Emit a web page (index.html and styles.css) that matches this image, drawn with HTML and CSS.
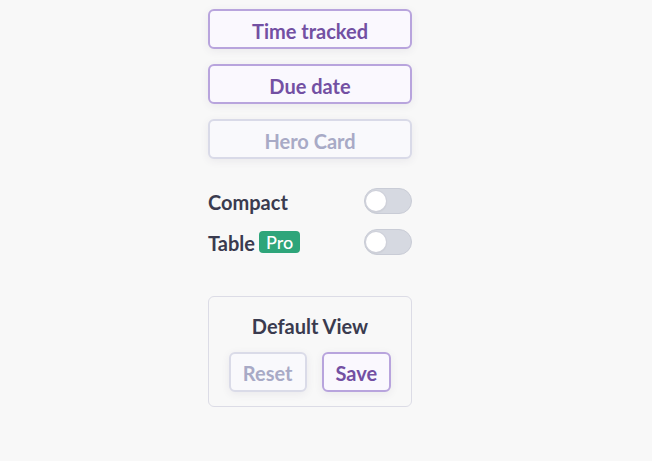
FILE: index.html
```html
<!DOCTYPE html>
<html lang="en">
<head>
<meta charset="utf-8">
<title>View settings</title>
<link rel="stylesheet" href="styles.css">
</head>
<body>
<div class="panel">
  <div class="options">
    <button class="opt">Time tracked</button>
    <button class="opt">Due date</button>
    <button class="opt opt-disabled">Hero Card</button>
  </div>
  <div class="toggles">
    <div class="row">
      <span class="label">Compact</span>
      <span class="switch"><span class="knob"></span></span>
    </div>
    <div class="row">
      <span class="label">Table <span class="badge">Pro</span></span>
      <span class="switch"><span class="knob"></span></span>
    </div>
  </div>
  <div class="card">
    <div class="card-title">Default View</div>
    <div class="actions">
      <button class="btn btn-muted">Reset</button>
      <button class="btn btn-primary">Save</button>
    </div>
  </div>
</div>
</body>
</html>
```
FILE: styles.css
```css
html, body {
  margin: 0;
  padding: 0;
  background: #f8f8f8;
}
body {
  font-family: Lato, "Noto Sans", sans-serif;
  color: #3a3b4f;
}
.panel {
  width: 204px;
  margin-left: 208px;
  padding-top: 9px;
}
.options {
  display: flex;
  flex-direction: column;
  gap: 15px;
}
.opt {
  height: 40px;
  box-sizing: border-box;
  border: 2px solid #b8a4dd;
  border-radius: 6px;
  background: #faf8fe;
  color: #7350a3;
  font-family: Lato, sans-serif;
  font-weight: 700;
  font-size: 20px;
  padding: 3px 0 0;
  box-shadow: 0 2px 8px rgba(60, 50, 90, 0.08);
}
.opt-disabled {
  border-color: #d9dae8;
  color: #a8aac6;
  background: #f9f9fc;
}
.toggles {
  margin-top: 29px;
  display: flex;
  flex-direction: column;
  gap: 15px;
}
.row {
  height: 26px;
  display: flex;
  align-items: center;
  justify-content: space-between;
}
.label {
  font-size: 20px;
  font-weight: 700;
  color: #3a3b4f;
  display: flex;
  align-items: center;
  gap: 4px;
  padding-top: 2px;
}
.badge {
  display: inline-block;
  background: #2ea57a;
  color: #ffffff;
  font-size: 18px;
  font-weight: 500;
  line-height: 22px;
  padding: 0 7px;
  border-radius: 4px;
  margin-top: -2px;
}
.switch {
  width: 48px;
  height: 26px;
  box-sizing: border-box;
  border-radius: 13px;
  background: #d6d9e1;
  border: 1px solid #c9ccd6;
  display: flex;
  align-items: center;
  padding-left: 1px;
}
.knob {
  width: 20px;
  height: 20px;
  border-radius: 50%;
  background: #ffffff;
  box-shadow: 0 0 0 1px #cfd1da, 0 1px 2px rgba(0,0,0,0.12);
}
.card {
  margin-top: 41px;
  border: 1px solid #dcdce6;
  border-radius: 6px;
  padding: 16px 0 14px;
  display: flex;
  flex-direction: column;
  align-items: center;
  gap: 15px;
}
.card-title {
  font-size: 20px;
  font-weight: 700;
  line-height: 24px;
  color: #3a3b4f;
  padding-top: 1px;
  margin-bottom: -1px;
}
.actions {
  display: flex;
  gap: 15px;
}
.btn {
  height: 40px;
  box-sizing: border-box;
  border-radius: 6px;
  padding: 1px 12px 0;
  font-family: Lato, sans-serif;
  font-weight: 700;
  font-size: 20px;
  box-shadow: 0 2px 8px rgba(60, 50, 90, 0.08);
}
.btn-muted {
  border: 2px solid #dadbe8;
  background: #f9f9fc;
  color: #a8aac6;
}
.btn-primary {
  border: 2px solid #b8a4dd;
  background: #faf8fe;
  color: #7350a3;
}
```
